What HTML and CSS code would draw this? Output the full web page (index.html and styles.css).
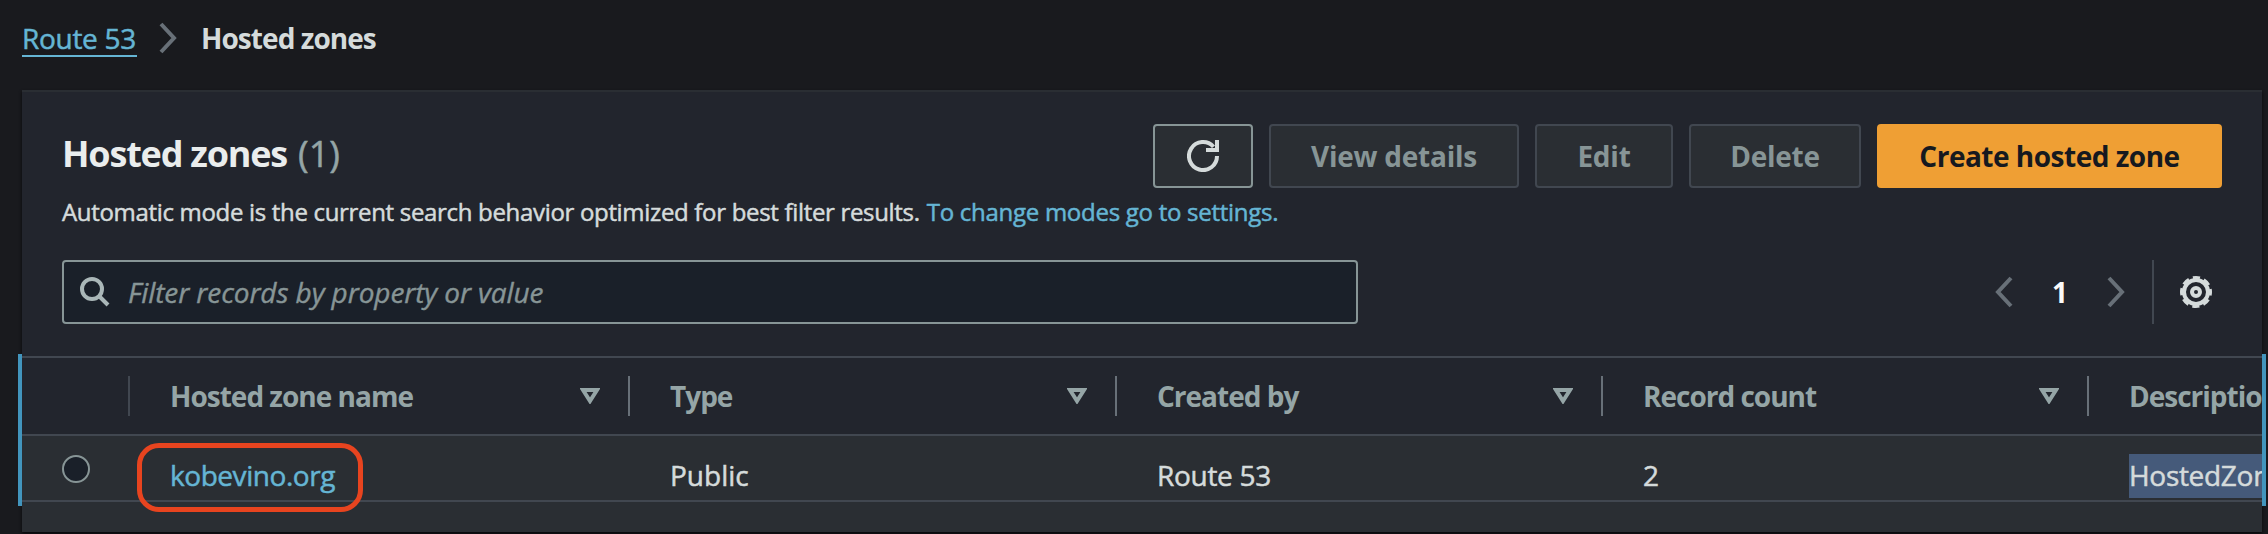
FILE: index.html
```html
<!DOCTYPE html>
<html lang="en">
<head>
<meta charset="utf-8">
<title>Hosted zones</title>
<link rel="stylesheet" href="styles.css">
</head>
<body>
<nav class="crumbs">
  <a class="crumb-link"><span class="t-route">Route 53</span></a>
  <svg class="crumb-sep" width="18" height="40" viewBox="0 0 18 40"><path d="M2 6 L15 20 L2 34"/></svg>
  <span class="crumb-current">Hosted zones</span>
</nav>
<main class="frame">
  <section class="panel">
    <header class="head">
      <div class="titles">
        <h1 class="title"><span class="title-name">Hosted zones</span><span class="count">(1)</span></h1>
        <p class="desc"><span class="desc-text">Automatic mode is the current search behavior optimized for best filter results.</span><a class="desc-link">To change modes go to settings.</a></p>
      </div>
      <div class="actions">
        <button class="btn refresh" aria-label="Refresh"><svg width="32" height="32" viewBox="0 0 32 32"><path d="M30 16 A14 14 0 1 1 26.5 6.800"/><path d="M30 0 V10 H19"/></svg></button>
        <button class="btn view">View details</button>
        <button class="btn edit">Edit</button>
        <button class="btn delete">Delete</button>
        <button class="btn create">Create hosted zone</button>
      </div>
    </header>
    <div class="tools">
      <div class="search">
        <svg width="30" height="30" viewBox="0 0 30 30"><circle cx="12" cy="12" r="10"/><path d="M19 19 L28 28"/></svg>
        <span class="placeholder">Filter records by property or value</span>
      </div>
      <div class="pager">
        <svg class="arrow" width="18" height="32" viewBox="0 0 18 32"><path d="M16 2 L3 16 L16 30"/></svg>
        <span class="page">1</span>
        <svg class="arrow" width="18" height="32" viewBox="0 0 18 32"><path d="M2 2 L15 16 L2 30"/></svg>
        <span class="rule"></span>
        <svg class="gear" width="32" height="32" viewBox="0 0 32 32"><circle cx="16" cy="16" r="12"/><circle cx="16" cy="16" r="14.200" stroke-width="3.600" stroke-dasharray="7 4.152" stroke-dashoffset="3.500"/><circle cx="16" cy="16" r="4"/></svg>
      </div>
    </div>
    <div class="grid header-row">
      <div class="th"></div>
      <div class="th"><span class="h-name">Hosted zone name</span><svg class="caret" width="20" height="16" viewBox="0 0 20 16"><path d="M3 2 H17 L10 13 Z"/></svg></div>
      <div class="th"><span class="h-type">Type</span><svg class="caret" width="20" height="16" viewBox="0 0 20 16"><path d="M3 2 H17 L10 13 Z"/></svg></div>
      <div class="th"><span class="h-created">Created by</span><svg class="caret" width="20" height="16" viewBox="0 0 20 16"><path d="M3 2 H17 L10 13 Z"/></svg></div>
      <div class="th"><span class="h-count">Record count</span><svg class="caret" width="20" height="16" viewBox="0 0 20 16"><path d="M3 2 H17 L10 13 Z"/></svg></div>
      <div class="th last"><span class="h-desc">Descriptio</span></div>
    </div>
    <div class="grid data-row">
      <div class="td pick"><span class="radio"></span></div>
      <div class="td"><a class="zone">kobevino.org</a></div>
      <div class="td"><span class="d-type">Public</span></div>
      <div class="td"><span class="t-route">Route 53</span></div>
      <div class="td"><span>2</span></div>
      <div class="td last"><span class="selected">HostedZon</span></div>
    </div>
    <div class="filler"></div>
  </section>
  <div class="focus-line focus-left"></div>
  <div class="focus-line focus-right"></div>
  <div class="highlight"></div>
</main>
</body>
</html>
```
FILE: styles.css
```css
* { box-sizing: border-box; }
body {
  margin: 0;
  width: 2268px;
  height: 534px;
  overflow: hidden;
  background: #191a1e;
  color: #d5dbdb;
  font: 400 28px/40px "Open Sans", "Noto Sans", sans-serif;
  white-space: nowrap;
}
svg { display: block; flex: none; fill: none; }
.crumb-link, .count, .desc, .td { -webkit-text-stroke: 0.5px currentColor; }
.crumbs { display: flex; height: 90px; padding: 18px 0 0 22px; align-items: flex-start; }
.crumb-link { height: 39px; width: 115px; color: #65b5d4; border-bottom: 2px solid #65b5d4; }
.t-route { letter-spacing: -0.3px; }
.crumb-sep { margin: 0 0 0 22px; stroke: #687078; stroke-width: 4; }
.crumb-current { margin-left: 24px; font-weight: 700; letter-spacing: -0.95px; }
.frame { position: relative; padding: 0 6px 0 22px; height: 444px; }
.panel {
  height: 442px;
  overflow: hidden;
  background: #22252d;
  border-top: 2px solid #2a2e33;
  box-shadow: 0 2px 3px #08090b;
}
.head { display: flex; justify-content: space-between; height: 168px; padding: 32px 40px 0; }
.titles { flex: 1 1 0; min-width: 0; }
.title { display: flex; gap: 11px; margin: 6px 0 0; font-size: 36px; line-height: 48px; color: #eaeded; }
.title-name { letter-spacing: -1.2px; }
.count { font-weight: 400; color: #95a5a6; }
.desc { display: flex; gap: 7px; margin: 17px 0 0; font-size: 24px; line-height: 34px; }
.desc-text { letter-spacing: -0.32px; }
.desc-link { color: #65b5d4; letter-spacing: -0.27px; }
.actions { display: flex; gap: 16px; }
.btn {
  display: flex;
  align-items: center;
  justify-content: center;
  height: 64px;
  padding: 0;
  border: 2px solid #414750;
  border-radius: 4px;
  background: #2a2e33;
  color: #879596;
  font: 700 28px/40px "Open Sans", "Noto Sans", sans-serif;
  letter-spacing: -0.25px;
}
.refresh { width: 100px; border-color: #879596; }
.refresh svg { stroke: #d5dbdb; stroke-width: 4; }
.view { width: 250px; }
.edit { width: 138px; }
.delete { width: 172px; }
.create { width: 345px; border-color: #ef9f34; background: #ef9f34; color: #16191f; letter-spacing: -0.5px; }
.tools { display: flex; justify-content: space-between; height: 96px; padding: 0 50px 0 40px; }
.search {
  display: flex;
  align-items: center;
  width: 1296px;
  height: 64px;
  padding-left: 16px;
  border: 2px solid #879596;
  border-radius: 4px;
  background: #1a2029;
}
.search svg { stroke: #aab7b8; stroke-width: 4; }
.placeholder { margin-left: 18px; color: #879596; font-style: italic; letter-spacing: -0.1px; -webkit-text-stroke: 0.4px currentColor; }
.pager { display: flex; align-items: center; height: 64px; }
.arrow { stroke: #687078; stroke-width: 4; }
.page { width: 94px; text-align: center; font-weight: 700; color: #fafafa; }
.rule { width: 2px; height: 64px; margin: 0 26px 0 27px; background: #414750; }
.gear { stroke: #d5dbdb; stroke-width: 4; }
.grid { display: grid; grid-template-columns: 108px 500px 487px 486px 486px 173px; }
.header-row { height: 80px; padding: 18px 0; border-top: 2px solid #414750; border-bottom: 2px solid #414750; }
.th {
  display: flex;
  align-items: center;
  justify-content: space-between;
  height: 40px;
  padding: 0 28px 0 40px;
  border-right: 2px solid #687078;
  color: #95a5a6;
  font-weight: 700;
  letter-spacing: -1px;
}
.th:first-child { border-color: #414750; }
.th.last, .td.last { border: 0; padding-right: 0; }
.caret { stroke: #95a5a6; stroke-width: 4; }
.data-row { height: 66px; background: #2a2e33; border-bottom: 2px solid #414750; }
.td { padding: 19px 0 0 40px; }
.radio { display: block; width: 28px; height: 28px; border: 2px solid #879596; border-radius: 50%; background: #1a2029; }
.zone { color: #65b5d4; letter-spacing: -0.45px; }
.selected { display: block; height: 44px; margin-top: -1px; overflow: hidden; line-height: 42px; letter-spacing: -0.3px; background: #455a7a; }
.filler { height: 30px; background: #2a2e33; }
.focus-line { position: absolute; top: 264px; width: 4px; height: 152px; background: #4295bd; }
.focus-left { left: 18px; }
.focus-right { right: 2px; }
.highlight { position: absolute; left: 137px; top: 353px; width: 226px; height: 69px; border: 5px solid #e8441f; border-radius: 22px; }
```
